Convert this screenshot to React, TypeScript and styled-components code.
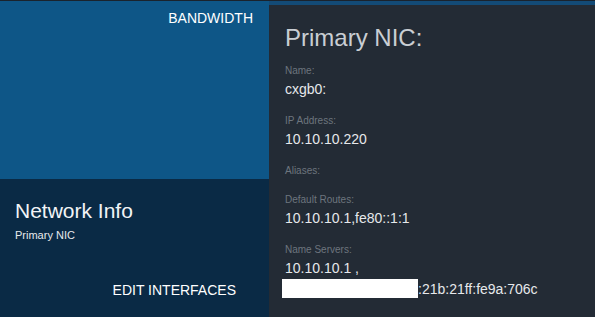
import * as React from 'react';
import styled, { createGlobalStyle } from 'styled-components';

const GlobalStyle = createGlobalStyle`
  html, body {
    margin: 0;
    padding: 0;
    background: #232b35;
  }
  body {
    font-family: "Liberation Sans", Arial, sans-serif;
  }
`;

const Page = styled.div`
  display: grid;
  grid-template-columns: 269px 1fr;
  width: 595px;
  height: 317px;
  box-sizing: border-box;
  border-top: 1px solid #1a232d;
  overflow: hidden;
`;

const Side = styled.div`
  display: flex;
  flex-direction: column;
`;

const Bandwidth = styled.div`
  height: 178px;
  background: #0e5687;
  display: flex;
  justify-content: flex-end;
  align-items: flex-start;
  padding: 9px 16px 0 0;
  box-sizing: border-box;
`;

const SideLink = styled.a`
  color: #ffffff;
  font-size: 14px;
  line-height: 16px;
  text-decoration: none;
  text-transform: uppercase;
  cursor: pointer;
`;

const Summary = styled.div`
  flex: 1;
  background: #0a2a45;
  display: flex;
  flex-direction: column;
  padding: 20px 0 0 15px;
`;

const SummaryTitle = styled.h2`
  margin: 0;
  font-size: 21px;
  line-height: 24px;
  font-weight: 400;
  color: #f2f4f6;
`;

const SummarySub = styled.div`
  margin-top: 5px;
  font-size: 11px;
  line-height: 14px;
  color: #e6e9ec;
`;

const SummaryFooter = styled.div`
  margin-top: auto;
  display: flex;
  justify-content: flex-end;
  padding: 0 33px 19px 0;
`;

const Details = styled.div`
  background: #232b35;
  border-top: 4px solid #134b77;
  padding: 19px 16px 0 16px;
`;

const DetailsTitle = styled.h1`
  margin: 0 0 11px 0;
  font-size: 24px;
  line-height: 28px;
  font-weight: 400;
  color: #c9ced3;
`;

const Field = styled.div`
  margin-bottom: 13px;
`;

const Label = styled.div`
  font-size: 10px;
  line-height: 16px;
  color: #6d757e;
`;

const Value = styled.div`
  font-size: 14px;
  line-height: 21px;
  color: #e6e8eb;
  white-space: nowrap;
`;

const Redacted = styled.span<{ $width: number }>`
  display: inline-block;
  vertical-align: top;
  width: ${p => p.$width}px;
  height: 19px;
  margin-left: -3px;
  background: #ffffff;
`;

const fields = [
  { label: 'Name:', value: ['cxgb0:'] },
  { label: 'IP Address:', value: ['10.10.10.220'] },
  { label: 'Aliases:', value: [] },
  { label: 'Default Routes:', value: ['10.10.10.1,fe80::1:1'] },
];

const App: React.FC = () => {
  return (
    <React.Fragment>
      <GlobalStyle />
      <Page>
        <Side>
          <Bandwidth>
            <SideLink>Bandwidth</SideLink>
          </Bandwidth>
          <Summary>
            <SummaryTitle>Network Info</SummaryTitle>
            <SummarySub>Primary NIC</SummarySub>
            <SummaryFooter>
              <SideLink>Edit Interfaces</SideLink>
            </SummaryFooter>
          </Summary>
        </Side>
        <Details>
          <DetailsTitle>Primary NIC:</DetailsTitle>
          {fields.map(f => (
            <Field key={f.label}>
              <Label>{f.label}</Label>
              {f.value.map(v => (
                <Value key={v}>{v}</Value>
              ))}
            </Field>
          ))}
          <Field>
            <Label>Name Servers:</Label>
            <Value>10.10.10.1 ,</Value>
            <Value>
              <Redacted $width={136} />:21b:21ff:fe9a:706c
            </Value>
          </Field>
        </Details>
      </Page>
    </React.Fragment>
  );
};

export default App;
